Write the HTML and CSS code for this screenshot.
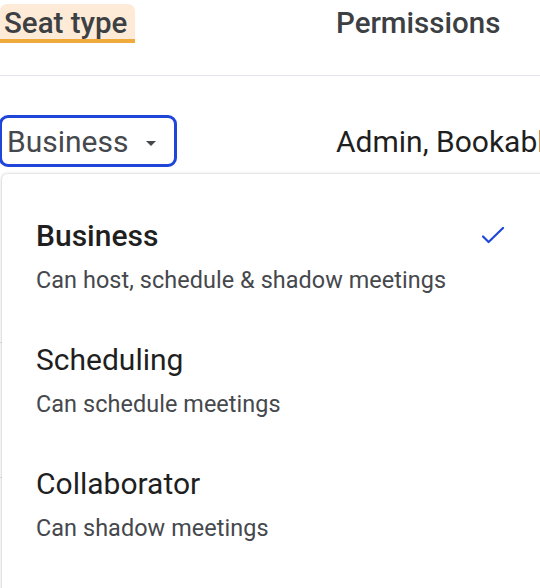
FILE: index.html
```html
<!DOCTYPE html>
<html>
<head>
<meta charset="utf-8">
<link rel="stylesheet" href="styles.css">
</head>
<body>
<div class="table">
  <div class="head-row">
    <div class="col-seat"><span class="sort-head">Seat type</span></div>
    <div class="col-perm"><span class="head-label">Permissions</span></div>
  </div>
  <div class="body-row">
    <div class="col-seat">
      <button class="seat-select">
        <span class="seat-value">Business</span>
        <span class="caret"></span>
      </button>
    </div>
    <div class="col-perm"><span class="perm-value">Admin, Bookable</span></div>
  </div>
  <div class="ghost-rows">
    <div class="ghost-row"></div>
    <div class="ghost-row"></div>
  </div>
  <div class="menu">
    <div class="menu-item selected">
      <div class="item-head">
        <span class="item-title">Business</span>
        <svg class="check" width="24" height="18" viewBox="0 0 24 18"><polyline points="1,9.5 6.6,15 21,1" fill="none" stroke="#1f46d8" stroke-width="2.2" stroke-linecap="round" stroke-linejoin="round"/></svg>
      </div>
      <div class="item-sub">Can host, schedule &amp; shadow meetings</div>
    </div>
    <div class="menu-item">
      <div class="item-head"><span class="item-title">Scheduling</span></div>
      <div class="item-sub">Can schedule meetings</div>
    </div>
    <div class="menu-item">
      <div class="item-head"><span class="item-title">Collaborator</span></div>
      <div class="item-sub">Can shadow meetings</div>
    </div>
  </div>
</div>
</body>
</html>
```

FILE: styles.css
```css
html, body {
  margin: 0;
  padding: 0;
  background: #ffffff;
  overflow: hidden;
}
body {
  font-family: Roboto, "Noto Sans", Arial, sans-serif;
  width: 540px;
  height: 588px;
}
.table {
  position: relative;
  width: 540px;
  height: 588px;
  overflow: hidden;
}
.head-row {
  display: grid;
  grid-template-columns: 336px 1fr;
  border-bottom: 1px solid #e4e4ea;
  padding-top: 4px;
  box-sizing: border-box;
  height: 76px;
}
.sort-head {
  display: inline-block;
  background: #fdebd7;
  border-bottom: 4px solid #f0aa3c;
  border-radius: 7px 7px 0 0;
  padding: 4px 8px 0 4px;
  font-size: 29.5px;
  line-height: 31px;
  font-weight: 500;
  color: #3c4043;
  white-space: nowrap;
}
.head-label {
  display: inline-block;
  padding-top: 4px;
  font-size: 29.5px;
  line-height: 31px;
  font-weight: 500;
  color: #3c4043;
  white-space: nowrap;
}
.body-row {
  display: grid;
  grid-template-columns: 336px 1fr;
  padding-top: 39px;
  align-items: start;
}
.seat-select {
  display: flex;
  align-items: center;
  gap: 18px;
  margin: 0 0 0 -1px;
  padding: 6px 18px 4px 5px;
  border: 3px solid #1f46d8;
  border-radius: 9px;
  background: #ffffff;
  font-family: inherit;
  cursor: pointer;
}
.seat-value {
  font-size: 30px;
  line-height: 36px;
  color: #45484c;
}
.caret {
  width: 0;
  height: 0;
  border-left: 5px solid transparent;
  border-right: 5px solid transparent;
  border-top: 5px solid #45484c;
  margin-top: 2px;
}
.perm-value {
  display: block;
  padding-top: 9px;
  font-size: 30px;
  line-height: 36px;
  color: #1f1f1f;
  white-space: nowrap;
}
.ghost-rows {
  display: flex;
  flex-direction: column;
}
.ghost-row {
  height: 134px;
  border-bottom: 1px solid #e4e4ea;
}
.ghost-row:first-child {
  height: 175px;
}
.menu {
  position: absolute;
  left: 2px;
  top: 174px;
  width: 560px;
  height: 440px;
  background: #ffffff;
  border-radius: 5px;
  box-shadow: 0 0 2px rgba(60, 64, 67, 0.35), 0 2px 6px rgba(60, 64, 67, 0.15);
  padding-top: 20px;
  box-sizing: border-box;
}
.menu-item {
  display: flex;
  flex-direction: column;
  gap: 11px;
  padding: 23.5px 0 23.5px 34px;
}
.item-head {
  display: flex;
  align-items: center;
  width: 470px;
}
.item-title {
  flex: 1;
  font-size: 30px;
  line-height: 36px;
  color: #1f1f1f;
}
.selected .item-title {
  font-weight: 500;
}
.check {
  display: block;
  margin-top: 1px;
}
.item-sub {
  font-size: 23.4px;
  letter-spacing: 0.08px;
  line-height: 30px;
  color: #45484c;
}
```
